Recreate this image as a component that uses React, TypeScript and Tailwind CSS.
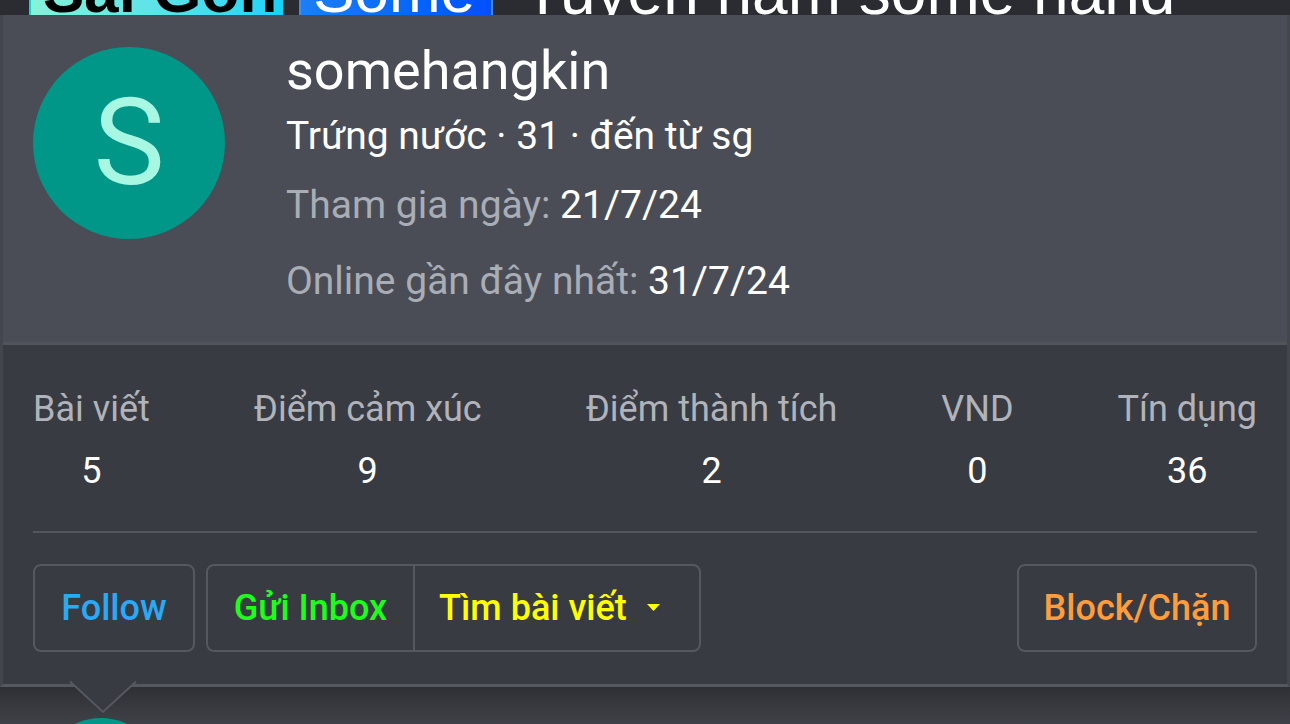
const stats = [
  { label: "Bài viết", value: "5" },
  { label: "Điểm cảm xúc", value: "9" },
  { label: "Điểm thành tích", value: "2" },
  { label: "VND", value: "0" },
  { label: "Tín dụng", value: "36" },
];

function TopStrip() {
  return (
    <div className="h-[15px] overflow-hidden bg-[#2a2c31] font-['Liberation_Sans',Arial,sans-serif]">
      <div className="flex items-start -mt-[40px] pl-[29px] text-[62px] leading-none whitespace-nowrap">
        <span className="border-l-2 border-[#10d8d0] bg-gradient-to-r from-[#86f2d8] to-[#14d2f6] pl-[12px] pr-[6px] pb-[12px] font-bold text-black">
          Sài Gòn
        </span>
        <span className="ml-[16px] border-x-2 border-[#3f8ef2] bg-gradient-to-r from-[#1d7ff3] to-[#0350fe] pl-[12px] pr-[16px] pb-[12px] text-white">
          Some
        </span>
        <span className="ml-[30px] text-[64px] text-white">Tuyển nam some hand</span>
      </div>
    </div>
  );
}

function Avatar() {
  return (
    <div className="flex h-[192px] w-[192px] shrink-0 items-center justify-center rounded-full bg-[#009688]">
      <span className="text-[120px] leading-none text-[#a8f7e3]">S</span>
    </div>
  );
}

function Stat({ label, value }: { label: string; value: string }) {
  return (
    <div className="flex flex-col items-center">
      <span className="text-[36px] leading-[42px] text-[#b0b3ba]">{label}</span>
      <span className="mt-[20px] text-[36px] leading-[42px] text-white">{value}</span>
    </div>
  );
}

function Popup() {
  return (
    <div className="relative border-x-[3px] border-b-[3px] border-x-[#43464d] border-b-[#55585f]">
      <div className="flex bg-[#4a4d55] pl-[30px] pt-[32px] h-[330px] border-b-[3px] border-[#51545b]">
        <Avatar />
        <div className="ml-[61px] -mt-[6px] flex flex-col">
          <div className="text-[54px] leading-[60px] text-white">somehangkin</div>
          <div className="mt-[12px] text-[39px] leading-[46px] text-white">
            Trứng nước · 31 · đến từ sg
          </div>
          <div className="mt-[23px] text-[39px] leading-[46px] text-[#a9adb5]">
            Tham gia ngày: <span className="text-white">21/7/24</span>
          </div>
          <div className="mt-[30px] text-[39px] leading-[46px] text-[#a9adb5]">
            Online gần đây nhất: <span className="text-white">31/7/24</span>
          </div>
        </div>
      </div>

      <div className="bg-[#393b43] px-[30px] pt-[43px] pb-[32px]">
        <div className="flex justify-between">
          {stats.map((s) => (
            <Stat key={s.label} label={s.label} value={s.value} />
          ))}
        </div>
        <div className="mt-[39px] h-[2px] bg-[#53565d]" />
        <div className="mt-[31px] flex items-center text-[36px] font-medium">
          <button className="flex h-[88px] w-[162px] items-center justify-center rounded-[8px] border-2 border-[#55585f] text-[#29a9f6]">
            Follow
          </button>
          <div className="ml-[11px] flex h-[88px] rounded-[8px] border-2 border-[#55585f]">
            <button className="flex w-[207px] items-center justify-center border-r-2 border-[#55585f] text-[#1bff1b]">
              Gửi Inbox
            </button>
            <button className="flex w-[284px] items-center pl-[24px] text-[#ffff00]">
              Tìm bài viết
              <svg className="ml-[20px]" width="13" height="8" viewBox="0 0 13 8">
                <polygon points="0,0 13,0 6.5,7" fill="#ffff00" />
              </svg>
            </button>
          </div>
          <button className="ml-auto flex h-[88px] w-[240px] items-center justify-center rounded-[8px] border-2 border-[#55585f] text-[#ff9d3c]">
            Block/Chặn
          </button>
        </div>
      </div>

      <svg
        className="absolute left-[66px] -bottom-[31px]"
        width="68"
        height="34"
        viewBox="0 0 68 34"
      >
        <polygon points="0,0 68,0 34,31" fill="#393b43" />
        <polyline points="1,0.5 34,31 67,0.5" fill="none" stroke="#55585f" strokeWidth="2" />
      </svg>
    </div>
  );
}

export default function App() {
  return (
    <div className="h-[724px] w-[1290px] overflow-hidden bg-[#3b3d44] font-['Roboto','Noto_Sans',sans-serif]">
      <TopStrip />
      <Popup />
      <div className="h-[40px] overflow-hidden bg-gradient-to-b from-[#2e3036] to-[#41434a]">
        <div className="ml-[41px] mt-[31px] h-[120px] w-[120px] rounded-full bg-[#009688]" />
      </div>
    </div>
  );
}
